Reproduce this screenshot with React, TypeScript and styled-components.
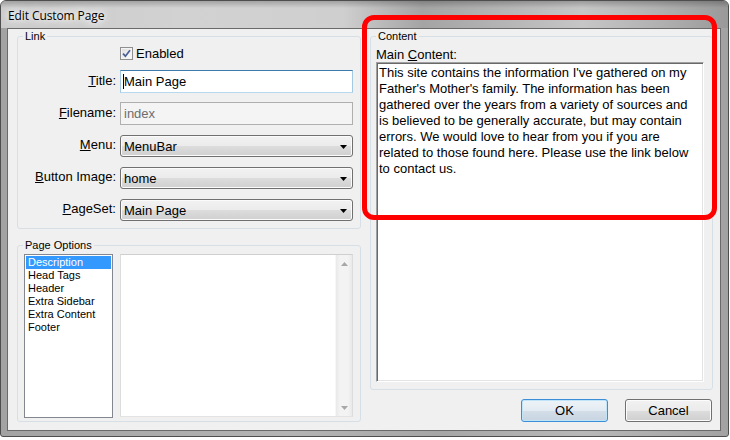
import React from 'react';
import styled, { createGlobalStyle } from 'styled-components';

const Global = createGlobalStyle`
  html, body { margin: 0; padding: 0; background: #ffffff; }
  body { width: 730px; height: 440px; overflow: hidden; font-family: "Liberation Sans", Arial, sans-serif; color: #000; }
  * { box-sizing: border-box; }
`;

const Stage = styled.div`
  position: relative;
  width: 730px;
  height: 440px;
`;

const Window = styled.div`
  width: 729px;
  height: 437px;
  display: flex;
  flex-direction: column;
  border: 1px solid #4e4e4e;
  border-radius: 6px 6px 3px 3px;
  overflow: hidden;
  background: linear-gradient(90deg, #a3a3a3 0%, #b4b4b4 40%, #a6a6a6 60%, #b8b8b8 80%, #a2a2a2 100%);
`;

const TitleBar = styled.div`
  height: 27px;
  flex: none;
  display: flex;
  align-items: center;
  padding: 1px 0 0 7px;
  background:
    linear-gradient(180deg, rgba(0,0,0,0.22) 0px, rgba(0,0,0,0) 7px),
    linear-gradient(90deg, #cbcbcb 0%, #d2d2d2 25%, #cfcfcf 47%, #a4a4a4 58%, #b6b6b6 70%, #c6c6c6 80%, #b2b2b2 90%, #999999 100%);
`;

const TitleText = styled.span`
  font-family: "Open Sans", "Noto Sans", sans-serif;
  font-size: 12px;
  letter-spacing: -0.1px;
  color: #000;
  text-shadow: 0 0 6px #fff, 0 0 10px #fff, 0 0 14px rgba(255,255,255,0.9);
`;

const FrameBody = styled.div`
  flex: 1;
  display: flex;
  padding: 0 7px 5px 6px;
`;

const Client = styled.div`
  flex: 1;
  display: grid;
  grid-template-columns: 344px 343px;
  column-gap: 9px;
  padding: 1px 7px 8px 9px;
  background: #f0f0f0;
  border: 1px solid #6a6a6a;
`;

const Column = styled.div<{ $gap: number }>`
  display: flex;
  flex-direction: column;
  gap: ${p => p.$gap}px;
  min-height: 0;
`;

const Group = styled.fieldset<{ $grow?: boolean }>`
  margin: 0;
  padding: 0;
  min-width: 0;
  border: 1px solid #d5dfe5;
  border-radius: 3px;
  display: flex;
  flex-direction: column;
  flex: ${p => (p.$grow ? '1' : 'none')};
  min-height: 0;
`;

const Legend = styled.legend`
  font-size: 11px;
  line-height: 13px;
  padding: 0 2px;
  margin-left: 5px;
  color: #000;
`;

const FormGrid = styled.div`
  display: grid;
  grid-template-columns: 98px 233px;
  grid-template-rows: 15px repeat(5, 23px);
  column-gap: 4px;
  row-gap: 9px;
  padding: 3px 7px 7px 0;
`;

const Label = styled.label`
  font-size: 13px;
  line-height: 22px;
  text-align: right;
  white-space: nowrap;
  color: #000;
`;

const CheckRow = styled.div`
  grid-column: 2;
  display: flex;
  align-items: center;
  gap: 3px;
  font-size: 13px;
  line-height: 15px;
`;

const CheckBox = styled.span`
  width: 13px;
  height: 13px;
  border: 1px solid #8f8f8f;
  background: linear-gradient(135deg, #dcdcdc 0%, #f4f4f4 70%, #fbfbfb 100%);
  box-shadow: inset 0 0 0 1px #f4f4f4;
  display: flex;
  align-items: center;
  justify-content: center;
`;

const FieldWrap = styled.div`
  position: relative;
  display: flex;
`;

const TextInput = styled.input<{ $focused?: boolean }>`
  width: 100%;
  height: 23px;
  margin: 0;
  padding: 0 3px;
  font-family: "Liberation Sans", Arial, sans-serif;
  font-size: 13px;
  color: #000;
  background: #fff;
  border: 1px solid;
  border-color: ${p => (p.$focused ? '#3d7bad #a4c9e3 #b7d9ed #a4c9e3' : '#abadb3 #dbdfe6 #e3e9ef #e2e3ea')};
  outline: none;
  &:disabled {
    background: #f4f4f4;
    border-color: #afafaf;
    color: #6d6d6d;
  }
`;

const Caret = styled.span`
  position: absolute;
  left: 3px;
  top: 4px;
  width: 1px;
  height: 15px;
  background: #000;
`;

const Combo = styled.div`
  align-self: end;
  height: 22px;
  display: flex;
  align-items: center;
  justify-content: space-between;
  padding: 1px 5px 0 3px;
  font-size: 13px;
  border: 1px solid #707070;
  border-radius: 3px;
  box-shadow: inset 0 0 0 1px #fbfbfb;
  background: linear-gradient(180deg, #f2f2f2 0%, #ebebeb 50%, #dddddd 51%, #cfcfcf 100%);
`;

const OptionsBody = styled.div`
  flex: 1;
  display: flex;
  gap: 7px;
  padding: 2px 7px 3px 6px;
  min-height: 0;
`;

const ListBox = styled.ul`
  width: 89px;
  margin: 0;
  padding: 1px;
  list-style: none;
  background: #fff;
  border: 1px solid #828790;
`;

const ListItem = styled.li<{ $selected?: boolean }>`
  font-size: 11px;
  line-height: 13px;
  padding-left: 2px;
  color: ${p => (p.$selected ? '#fff' : '#000')};
  background: ${p => (p.$selected ? '#3399ff' : 'transparent')};
`;

const EditBox = styled.div`
  flex: 1;
  display: flex;
  justify-content: flex-end;
  background: #fff;
  border: 1px solid;
  border-color: #cfcfcf #dcdcdc #e3e3e3 #dcdcdc;
  margin-bottom: 1px;
`;

const ScrollBar = styled.div`
  width: 17px;
  display: flex;
  flex-direction: column;
  justify-content: space-between;
  background: linear-gradient(90deg, #e9e9e9 0%, #f3f3f3 25%, #f3f3f3 75%, #e9e9e9 100%);
  border-left: 1px solid #f7f7f7;
`;

const ScrollArrow = styled.div`
  height: 17px;
  display: flex;
  align-items: center;
  justify-content: center;
`;

const ContentBody = styled.div`
  flex: 1;
  display: flex;
  flex-direction: column;
  padding: 4px 8px 7px 5px;
  min-height: 0;
`;

const ContentLabel = styled.div`
  font-size: 13px;
  line-height: 15px;
`;

const MainText = styled.textarea`
  flex: 1;
  margin: 0;
  resize: none;
  overflow: hidden;
  font-family: "Liberation Sans", Arial, sans-serif;
  font-size: 13px;
  line-height: 16px;
  padding: 2px 2px;
  color: #000;
  background: #fff;
  border: 1px solid;
  border-color: #a0a0a0 #ffffff #ffffff #a0a0a0;
  box-shadow: inset 1px 1px 0 #696969, inset -1px -1px 0 #e3e3e3;
  outline: none;
  white-space: pre;
`;

const ButtonRow = styled.div`
  height: 23px;
  flex: none;
  display: flex;
  justify-content: flex-end;
  gap: 17px;
  padding-right: 1px;
`;

const Button = styled.button<{ $default?: boolean }>`
  width: 87px;
  height: 23px;
  margin: 0;
  padding: 0;
  font-family: "Liberation Sans", Arial, sans-serif;
  font-size: 13px;
  color: #000;
  border-radius: 3px;
  border: 1px solid ${p => (p.$default ? '#3c8fd6' : '#707070')};
  box-shadow: inset 0 0 0 1px ${p => (p.$default ? '#bfe4f8' : '#fcfcfc')};
  background: ${p =>
    p.$default
      ? 'linear-gradient(180deg, #edf3f8 0%, #e3ebf2 50%, #d3dee8 51%, #c7d4e0 100%)'
      : 'linear-gradient(180deg, #f2f2f2 0%, #ebebeb 50%, #dddddd 51%, #cfcfcf 100%)'};
`;

const Highlight = styled.div`
  position: absolute;
  left: 362px;
  top: 15px;
  width: 355px;
  height: 205px;
  border: 5px solid #ff0000;
  border-radius: 12px;
  pointer-events: none;
`;

const DownArrow = ({ color = '#000' }: { color?: string }) => (
  <svg width="7" height="4" viewBox="0 0 7 4"><path d="M0 0H7L3.5 4Z" fill={color} /></svg>
);
const UpArrow = ({ color = '#000' }: { color?: string }) => (
  <svg width="7" height="4" viewBox="0 0 7 4"><path d="M0 4H7L3.5 0Z" fill={color} /></svg>
);

const contentText = [
  "This site contains the information I've gathered on my",
  "Father's Mother's family. The information has been",
  'gathered over the years from a variety of sources and',
  'is believed to be generally accurate, but may contain',
  'errors. We would love to hear from you if you are',
  'related to those found here. Please use the link below',
  'to contact us.',
].join('\n');

const options = ['Description', 'Head Tags', 'Header', 'Extra Sidebar', 'Extra Content', 'Footer'];

export default function App() {
  return (
    <Stage>
      <Global />
      <Window>
        <TitleBar>
          <TitleText>Edit Custom Page</TitleText>
        </TitleBar>
        <FrameBody>
          <Client>
            <Column $gap={10}>
              <Group>
                <Legend>Link</Legend>
                <FormGrid>
                  <CheckRow>
                    <CheckBox>
                      <svg width="9" height="9" viewBox="0 0 9 9">
                        <path d="M1 4.6 L3.4 7.2 L8 1.2" fill="none" stroke="#4a5f97" strokeWidth="1.7" />
                      </svg>
                    </CheckBox>
                    Enabled
                  </CheckRow>
                  <Label><u>T</u>itle:</Label>
                  <FieldWrap>
                    <TextInput $focused readOnly value="Main Page" />
                    <Caret />
                  </FieldWrap>
                  <Label><u>F</u>ilename:</Label>
                  <FieldWrap>
                    <TextInput disabled value="index" readOnly />
                  </FieldWrap>
                  <Label><u>M</u>enu:</Label>
                  <Combo><span>MenuBar</span><DownArrow /></Combo>
                  <Label><u>B</u>utton Image:</Label>
                  <Combo><span>home</span><DownArrow /></Combo>
                  <Label><u>P</u>ageSet:</Label>
                  <Combo><span>Main Page</span><DownArrow /></Combo>
                </FormGrid>
              </Group>
              <Group $grow>
                <Legend>Page Options</Legend>
                <OptionsBody>
                  <ListBox>
                    {options.map((o, i) => (
                      <ListItem key={o} $selected={i === 0}>{o}</ListItem>
                    ))}
                  </ListBox>
                  <EditBox>
                    <ScrollBar>
                      <ScrollArrow><UpArrow color="#a7a7a7" /></ScrollArrow>
                      <ScrollArrow><DownArrow color="#a7a7a7" /></ScrollArrow>
                    </ScrollBar>
                  </EditBox>
                </OptionsBody>
              </Group>
            </Column>
            <Column $gap={9}>
              <Group $grow>
                <Legend>Content</Legend>
                <ContentBody>
                  <ContentLabel>Main <u>C</u>ontent:</ContentLabel>
                  <MainText readOnly value={contentText} />
                </ContentBody>
              </Group>
              <ButtonRow>
                <Button $default>OK</Button>
                <Button>Cancel</Button>
              </ButtonRow>
            </Column>
          </Client>
        </FrameBody>
      </Window>
      <Highlight />
    </Stage>
  );
}
